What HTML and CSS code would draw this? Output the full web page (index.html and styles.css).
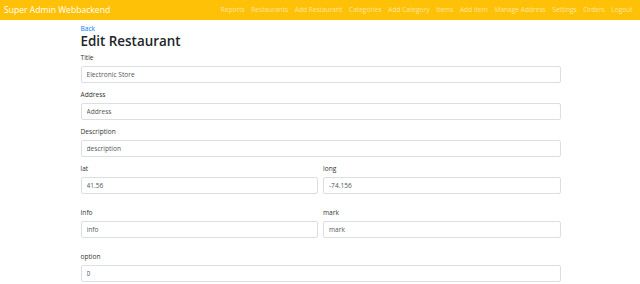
FILE: index.html
```html
<!DOCTYPE html>
<html>
<head lang="en">
    <meta charset="UTF-8">
    <title>Edit Restaurant</title>
    <link rel="stylesheet" href="styles.css">
</head>
<body>
<nav class="navbar">
    <a class="brand" href="#">Super Admin Webbackend</a>
    <ul class="nav_links">
        <li><a href="#">Reports</a></li>
        <li><a href="#">Restaurants</a></li>
        <li><a href="#">Add Restaurant</a></li>
        <li><a href="#">Categories</a></li>
        <li><a href="#">Add Category</a></li>
        <li><a href="#">Items</a></li>
        <li><a href="#">Add Item</a></li>
        <li><a href="#">Manage Address</a></li>
        <li><a href="#">Settings</a></li>
        <li><a href="#">Orders</a></li>
        <li><a href="#">Logout</a></li>
    </ul>
</nav>
<div class="container">
    <a class="back" href="#">Back</a>
    <h2>Edit Restaurant</h2>
    <form>
        <div class="form_group">
            <label>Title</label>
            <input type="text" value="Electronic Store">
        </div>
        <div class="form_group">
            <label>Address</label>
            <input type="text" value="Address">
        </div>
        <div class="form_group">
            <label>Description</label>
            <input type="text" value="description">
        </div>
        <div class="row">
            <div class="form_group">
                <label>lat</label>
                <input type="text" value="41.56">
            </div>
            <div class="form_group">
                <label>long</label>
                <input type="text" value="-74.156">
            </div>
        </div>
        <div class="row">
            <div class="form_group">
                <label>Info</label>
                <input type="text" value="info">
            </div>
            <div class="form_group">
                <label>mark</label>
                <input type="text" value="mark">
            </div>
        </div>
        <div class="form_group">
            <label>option</label>
            <input type="text" value="0">
        </div>
    </form>
</div>
</body>
</html>
```
FILE: styles.css
```css
*{
    margin: 0;
    padding: 0;
    box-sizing: border-box;
}
body{
    font-family: "Open Sans", "Noto Sans", sans-serif;
    color: #212529;
    background: #ffffff;
}
a{
    text-decoration: none;
}
.navbar{
    display: flex;
    align-items: center;
    height: 20px;
    padding: 0 4px;
    background: #ffc107;
}
.brand{
    color: #ffffff;
    font-size: 8.6px;
    line-height: 12px;
}
.nav_links{
    display: flex;
    list-style: none;
    margin-left: auto;
}
.nav_links a{
    display: block;
    padding: 0 3.3px;
    font-size: 6.6px;
    line-height: 10px;
    color: rgba(255, 255, 255, 0.6);
}
.container{
    width: 481px;
    margin: 0 auto;
    padding-left: 1px;
}
.back{
    display: block;
    margin-top: 4px;
    font-size: 6.6px;
    line-height: 9px;
    color: #007bff;
}
h2{
    font-size: 13.4px;
    font-weight: 600;
    line-height: 17px;
    margin-bottom: 3px;
}
.form_group{
    margin-bottom: 7px;
}
.form_group label{
    display: block;
    font-size: 6.6px;
    line-height: 9px;
    margin-bottom: 4px;
    color: #333333;
}
.form_group input{
    display: block;
    width: 100%;
    height: 17px;
    padding: 0 5px;
    border: 1px solid #dcdfe2;
    border-radius: 2px;
    font-family: inherit;
    font-size: 6.6px;
    color: #555555;
    background: #ffffff;
}
.row{
    display: flex;
    gap: 5px;
    margin-bottom: 7px;
}
.row .form_group{
    flex: 1;
}
```
